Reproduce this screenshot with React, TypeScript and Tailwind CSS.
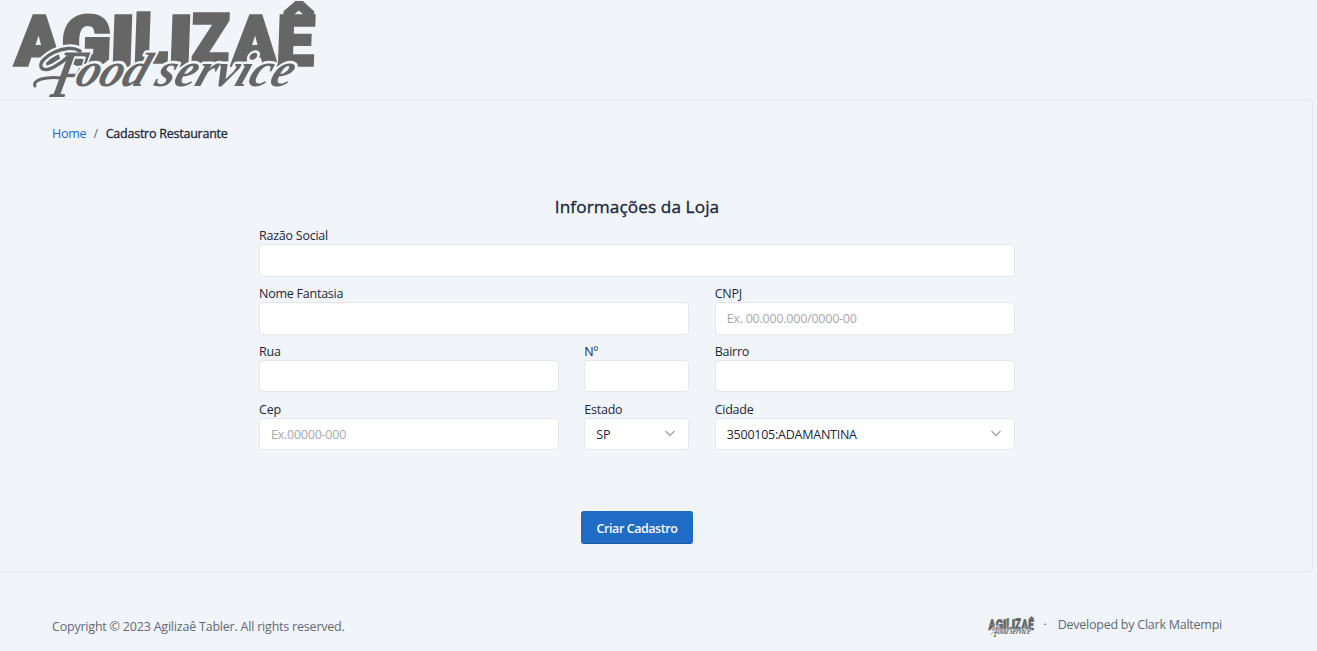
import React from "react";

const blockLetters = [
  { ch: "A", x: 15, y: 65, w: 45 },
  { ch: "G", x: 61, y: 65, w: 49 },
  { ch: "I", x: 109.5, y: 65, w: 24 },
  { ch: "L", x: 133, y: 62, w: 34 },
  { ch: "I", x: 167.5, y: 65, w: 24 },
  { ch: "Z", x: 191, y: 63, w: 37 },
  { ch: "A", x: 232, y: 65, w: 44 },
  { ch: "Ê", x: 276, y: 65, w: 37 },
];

function Logo({ className }: { className: string }) {
  return (
    <svg viewBox="12 0 304 99" preserveAspectRatio="none" className={`overflow-visible ${className}`} fill="#666666">
      <g fontFamily="Roboto, sans-serif" fontWeight="900" stroke="#666666" strokeWidth="3.5">
        {blockLetters.map((l, i) => (
          <text
            key={i}
            fontSize="69"
            textLength={l.w}
            lengthAdjust="spacingAndGlyphs"
            transform={`translate(${l.x} ${l.y}) skewX(-2)`}
          >
            {l.ch}
          </text>
        ))}
      </g>
      <g fill="none" strokeLinecap="round" strokeLinejoin="round">
        <path
          d="M80 51 C66 42 38 58 41 67 C45 75 62 63 70 55 M62 78 C46 76 32 80 35 86"
          stroke="#f1f5f9"
          strokeWidth="8"
        />
      </g>
      <g
        fontFamily="'Liberation Serif', serif"
        fontStyle="italic"
        fontWeight="700"
        stroke="#f1f5f9"
        strokeWidth="5"
        strokeLinejoin="round"
        paintOrder="stroke"
      >
        <text transform="translate(49 97) skewX(-14)" fontSize="68" textLength="31" lengthAdjust="spacingAndGlyphs">
          F
        </text>
        <text transform="translate(73 86) skewX(-20)" fontSize="48" textLength="70" lengthAdjust="spacingAndGlyphs">
          ood
        </text>
        <text transform="translate(153 86) skewX(-20)" fontSize="48" textLength="136" lengthAdjust="spacingAndGlyphs">
          service
        </text>
      </g>
      <g fill="none" stroke="#666666" strokeLinecap="round" strokeLinejoin="round">
        <path d="M80 51 C66 42 38 58 41 67 C45 75 62 63 70 55" strokeWidth="3.4" />
        <path d="M62 78 C46 76 32 80 35 86" strokeWidth="3" />
      </g>
    </svg>
  );
}

const box =
  "w-full rounded-[4px] border border-[#e6e7e9] bg-white px-[11px] text-[12.5px] tracking-[-0.24px] text-[#1d273b]";

function Field({ label, placeholder, span, tall }: { label: string; placeholder?: string; span: string; tall?: boolean }) {
  return (
    <label className={`block ${span}`}>
      <span className="block h-[18px] leading-[20px]">{label}</span>
      <input
        placeholder={placeholder}
        className={`${box} block placeholder:text-[#a5a9b1] ${tall ? "h-[33px]" : "h-[32px]"}`}
      />
    </label>
  );
}

function Select({ label, value, span }: { label: string; value: string; span: string }) {
  return (
    <div className={span}>
      <span className="block h-[18px] leading-[20px]">{label}</span>
      <div className={`${box} flex h-[32px] items-center justify-between pr-[12px]`}>
        <span className="pt-[2px]">{value}</span>
        <svg width="12" height="12" viewBox="0 0 12 12" fill="none" stroke="#a5a9b1" strokeWidth="1.4">
          <path d="M1.5 3 L6 7.5 L10.5 3" />
        </svg>
      </div>
    </div>
  );
}

export default function App() {
  return (
    <div className="flex h-[651px] w-[1317px] flex-col overflow-hidden bg-[#f1f5f9] font-['Open_Sans',sans-serif] text-[12.5px] tracking-[-0.24px] text-[#1d273b]">
      <header className="h-[99px] pl-[12px]">
        <Logo className="block h-[99px] w-[304px]" />
      </header>
      <main className="h-[473px] w-[1313px] rounded-r-[4px] border border-l-0 border-[#e6e7e9]">
        <nav className="mt-[24px] flex h-[20px] items-center pl-[52px]">
          <a className="text-[#206bc4]">Home</a>
          <span className="pl-[7px] pr-[8px] text-[#626976]">/</span>
          <span className="[-webkit-text-stroke:0.3px_#1d273b]">Cadastro Restaurante</span>
        </nav>
        <form className="ml-[259px] mt-[49px] w-[756px]">
          <h2 className="h-[28px] text-center text-[17.2px] leading-[28px] tracking-[0.1px] [-webkit-text-stroke:0.35px_#1d273b]">
            Informações da Loja
          </h2>
          <div className="mt-[5px] grid grid-cols-[300px_105px_300px] gap-x-[25.33px]">
            <div className="col-span-3 grid h-[116px] grid-cols-subgrid content-start gap-y-[7px]">
              <Field label="Razão Social" span="col-span-3" tall />
              <Field label="Nome Fantasia" span="col-span-2" tall />
              <Field label="CNPJ" placeholder="Ex. 00.000.000/0000-00" span="" tall />
            </div>
            <div className="col-span-3 grid grid-cols-subgrid gap-y-[8px]">
              <Field label="Rua" span="" />
              <Field label="Nº" span="" />
              <Field label="Bairro" span="" />
              <Field label="Cep" placeholder="Ex.00000-000" span="" />
              <Select label="Estado" value="SP" span="" />
              <Select label="Cidade" value="3500105:ADAMANTINA" span="" />
            </div>
          </div>
          <div className="mt-[61px] flex justify-center">
            <button
              type="button"
              className="h-[33px] w-[112px] rounded-[3px] border border-[#206bc4] border-b-[#1b59a3] bg-[#206bc4] pt-[3px] font-semibold tracking-[-0.44px] text-[#f8fafc]"
            >
              Criar Cadastro
            </button>
          </div>
        </form>
      </main>
      <footer className="flex h-[79px] items-center justify-between pl-[52px] pr-[95px] pt-[27px] text-[#626976]">
        <span className="pt-[5px] tracking-[-0.21px]">Copyright © 2023 Agilizaê Tabler. All rights reserved.</span>
        <div className="flex items-center">
          <Logo className="mt-[3px] h-[21px] w-[46px]" />
          <span className="pl-[10px] pr-[11px]">·</span>
          <span>Developed by Clark Maltempi</span>
        </div>
      </footer>
    </div>
  );
}
